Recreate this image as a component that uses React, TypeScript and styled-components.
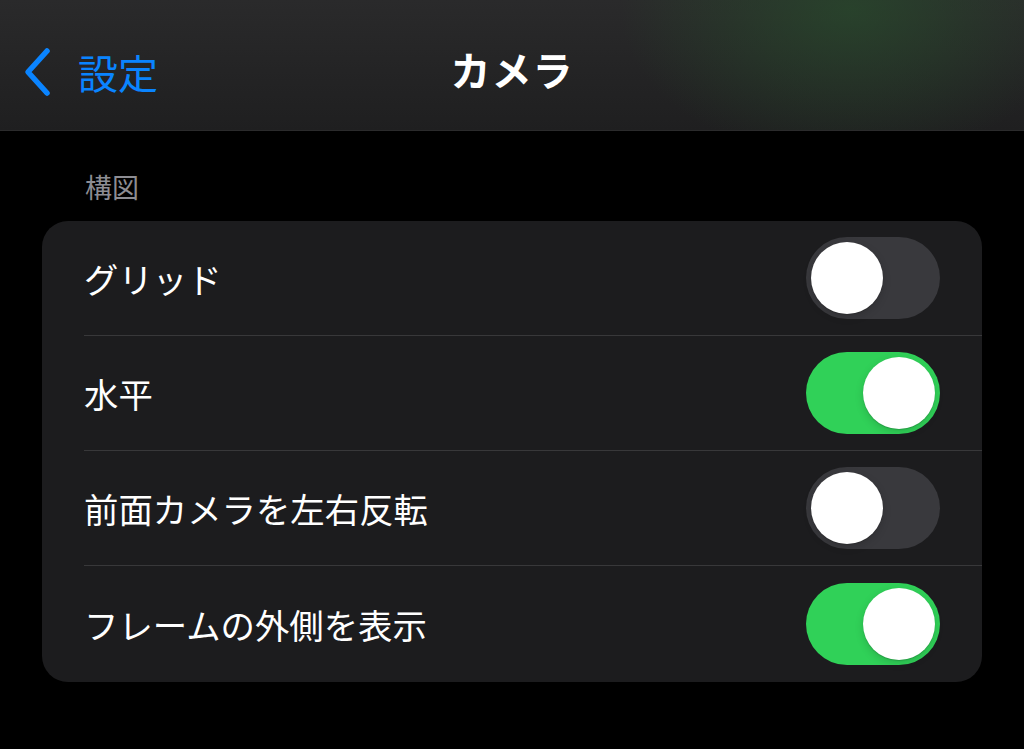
import styled, { createGlobalStyle } from "styled-components";

const GlobalStyle = createGlobalStyle`
   html, body {
      margin: 0;
      padding: 0;
      background: #000;
   }
   body {
      font-family: "Noto Sans CJK JP", "Noto Sans", sans-serif;
      -webkit-font-smoothing: antialiased;
   }
`;

interface Setting {
   label: string;
   on: boolean;
}

const settings: Setting[] = [
   { label: "グリッド", on: false },
   { label: "水平", on: true },
   { label: "前面カメラを左右反転", on: false },
   { label: "フレームの外側を表示", on: true },
];

function Chevron() {
   return (
      <svg width="30" height="50" viewBox="0 0 30 50">
         <path
            d="M25 4 L6 25 L25 46"
            fill="none"
            stroke="#0a84ff"
            strokeWidth="5.5"
            strokeLinecap="round"
            strokeLinejoin="round"
         />
      </svg>
   );
}

function App() {
   return (
      <Page>
         <GlobalStyle />
         <NavBar>
            <BackButton>
               <Chevron />
               <span>設定</span>
            </BackButton>
            <Title>カメラ</Title>
         </NavBar>
         <Content>
            <SectionHeader>構図</SectionHeader>
            <Card>
               {settings.map((s, i) => (
                  <Row key={s.label} $last={i === settings.length - 1}>
                     <Label>{s.label}</Label>
                     <Toggle $on={s.on}>
                        <Knob />
                     </Toggle>
                  </Row>
               ))}
            </Card>
         </Content>
      </Page>
   );
}

export default App;

const Page = styled.div`
   width: 1024px;
   height: 749px;
   background: #000;
   overflow: hidden;
`;

const NavBar = styled.header`
   position: relative;
   height: 130px;
   display: flex;
   align-items: center;
   justify-content: center;
   background:
      radial-gradient(ellipse 230px 150px at 850px 10px, rgba(40, 76, 44, 0.7), rgba(40, 76, 44, 0) 100%),
      linear-gradient(180deg, #2a2a2b 0%, #1f1f20 100%);
   border-bottom: 1px solid #2b2b2c;
`;

const BackButton = styled.div`
   position: absolute;
   left: 22px;
   top: 47px;
   display: flex;
   align-items: center;
   gap: 26px;
   color: #0a84ff;
   font-size: 40px;
   line-height: 50px;
`;

const Title = styled.h1`
   margin: 0;
   margin-top: 8px;
   color: #fff;
   font-size: 40px;
   font-weight: 700;
   letter-spacing: 1px;
`;

const Content = styled.main`
   padding: 0 42px;
`;

const SectionHeader = styled.div`
   padding: 36px 0 0 43px;
   height: 54px;
   color: #8d8d93;
   font-size: 27px;
   line-height: 40px;
`;

const Card = styled.section`
   width: 940px;
   background: #1c1c1e;
   border-radius: 26px;
   overflow: hidden;
`;

const Row = styled.div<{ $last: boolean }>`
   box-sizing: border-box;
   height: ${(p) => (p.$last ? "116px" : "115px")};
   margin-left: 42px;
   padding-right: 42px;
   display: flex;
   align-items: center;
   justify-content: space-between;
   border-bottom: ${(p) => (p.$last ? "none" : "1px solid #38383a")};
`;

const Label = styled.span`
   color: #fff;
   font-size: 34.4px;
   line-height: 40px;
`;

const Toggle = styled.div<{ $on: boolean }>`
   width: 134px;
   height: 82px;
   border-radius: 41px;
   padding: 5px;
   box-sizing: border-box;
   display: flex;
   justify-content: ${(p) => (p.$on ? "flex-end" : "flex-start")};
   background: ${(p) => (p.$on ? "#30d158" : "#39393d")};
`;

const Knob = styled.div`
   width: 72px;
   height: 72px;
   border-radius: 50%;
   background: #fff;
   box-shadow: 0 3px 8px rgba(0, 0, 0, 0.15), 0 1px 1px rgba(0, 0, 0, 0.16);
`;
